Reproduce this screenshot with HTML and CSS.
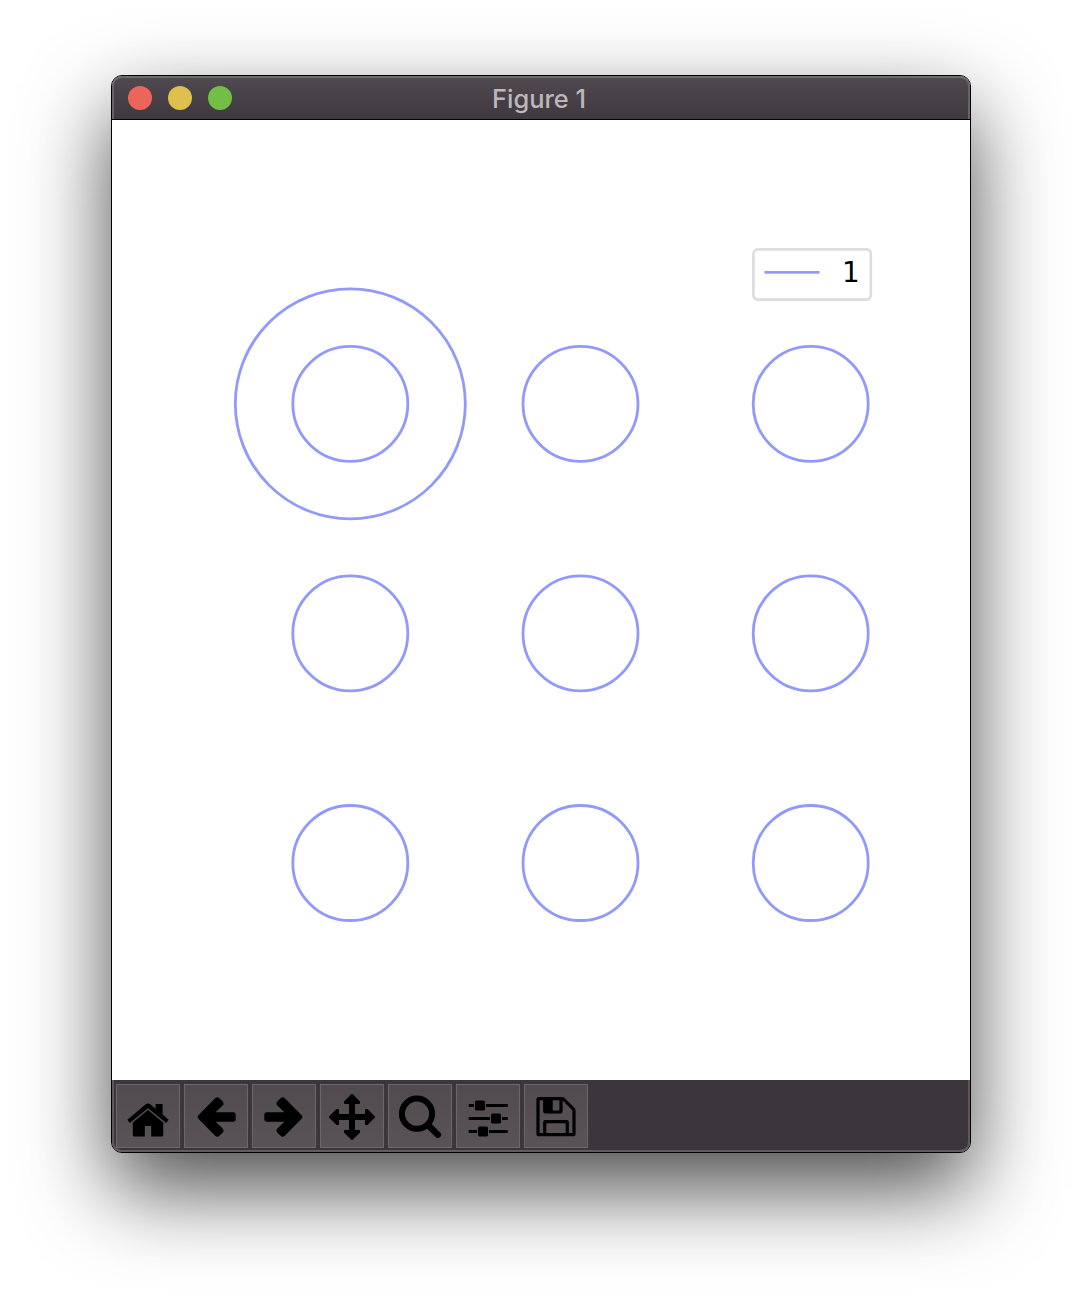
FILE: index.html
```html
<!DOCTYPE html>
<html lang="en">
<head>
<meta charset="utf-8">
<title>Figure 1</title>
<link rel="stylesheet" href="styles.css">
</head>
<body>
<main class="window">
  <header class="titlebar">
    <div class="lights"><span class="light close"></span><span class="light minimize"></span><span class="light expand"></span></div>
    <h1 class="title">Figure 1</h1>
  </header>
  <svg class="plot" viewBox="112 120 858 960" width="858" height="960">
    <g class="curves">
      <circle cx="350.3" cy="403.8" r="115"/>
      <circle cx="350.3" cy="403.8" r="57.5"/>
      <circle cx="580.5" cy="403.8" r="57.5"/>
      <circle cx="810.7" cy="403.8" r="57.5"/>
      <circle cx="350.3" cy="633.4" r="57.5"/>
      <circle cx="580.5" cy="633.4" r="57.5"/>
      <circle cx="810.7" cy="633.4" r="57.5"/>
      <circle cx="350.3" cy="863" r="57.5"/>
      <circle cx="580.5" cy="863" r="57.5"/>
      <circle cx="810.7" cy="863" r="57.5"/>
      <path d="M764.5 272.4H819.5"/>
    </g>
    <rect class="legend-box" x="753.4" y="249.4" width="117.4" height="50.2" rx="4.5"/>
    <text class="legend-text" x="842" y="282">1</text>
  </svg>
  <nav class="toolbar">
    <button class="tool" aria-label="Home"><svg viewBox="0 0 64 64">
      <path d="M32 26 47.2 38.6V51Q47.2 52.6 45.6 52.6H35.2V42H28.8V52.6H18.4Q16.8 52.6 16.8 51V38.6Z"/>
      <path d="M32 19.6Q33.4 19.6 34.6 20.6L39.6 24.8V20H46.6V30.6L52.6 35.8 50.2 39 32 24.2 13.8 39 11.4 35.8 29.4 20.6Q30.6 19.6 32 19.6Z"/>
    </svg></button>
    <button class="tool" aria-label="Back"><svg viewBox="0 0 64 64">
      <path class="arrow" d="M14.8 32.2 31.8 14.9Q33.3 13.5 34.8 14.9L38 18Q39.3 19.4 38 20.8L29.4 29.2H49Q50.8 29.2 50.8 31V35Q50.8 36.8 49 36.8H29.4L38 45.2Q39.3 46.6 38 48L34.8 51.1Q33.3 52.5 31.8 51.1L14.8 33.8Q14.2 33 14.8 32.2Z"/>
    </svg></button>
    <button class="tool" aria-label="Forward"><svg viewBox="0 0 64 64">
      <path class="arrow" transform="matrix(-1 0 0 1 64 0)" d="M14.8 32.2 31.8 14.9Q33.3 13.5 34.8 14.9L38 18Q39.3 19.4 38 20.8L29.4 29.2H49Q50.8 29.2 50.8 31V35Q50.8 36.8 49 36.8H29.4L38 45.2Q39.3 46.6 38 48L34.8 51.1Q33.3 52.5 31.8 51.1L14.8 33.8Q14.2 33 14.8 32.2Z"/>
    </svg></button>
    <button class="tool" aria-label="Pan"><svg viewBox="0 0 64 64">
      <path class="round" d="M32 11 39 18V19H34V31H46V26H47L54 33 47 40H46V35H34V47H39V48L32 55 25 48V47H30V35H18V40H17L10 33 17 26H18V31H30V19H25V18Z"/>
    </svg></button>
    <button class="tool" aria-label="Zoom"><svg viewBox="0 0 64 64">
      <circle class="line lens" cx="29" cy="29.7" r="15.1"/><path class="line handle" d="M40.5 41.5 49.8 50.8"/>
    </svg></button>
    <button class="tool" aria-label="Configure subplots"><svg viewBox="0 0 64 64">
      <path d="M12.7 19.9H18V23.1H12.7ZM30 19.9H51.7V23.1H30ZM12.7 32.9H34V36.1H12.7ZM46 32.9H51.7V36.1H46ZM12.7 45.9H21V49.1H12.7ZM33 45.9H51.7V49.1H33Z"/>
      <rect x="19" y="16.5" width="10" height="10" rx="1.5"/><rect x="35" y="29.5" width="10" height="10" rx="1.5"/><rect x="22" y="42.5" width="10" height="10" rx="1.5"/>
    </svg></button>
    <button class="tool" aria-label="Save"><svg viewBox="0 0 64 64">
      <path class="line disk" d="M15 14.7H38Q39 14.7 40 15.7L49 24.7Q50 25.7 50 27V49.7Q50 50.7 49 50.7H15Q14 50.7 14 49.7V15.7Q14 14.7 15 14.7Z"/>
      <path class="line disk" d="M20.7 15V27.2Q20.7 28 21.5 28H36.2Q37 28 37 27.2V15M20.7 50.7V38.5Q20.7 37.7 21.5 37.7H42.5Q43.3 37.7 43.3 38.5V50.7"/>
      <path d="M20 14H28.7V28H20Z"/>
    </svg></button>
  </nav>
</main>
</body>
</html>
```
FILE: styles.css
```css
* { box-sizing: border-box; }
body { margin: 0; padding: 75px 0 0 111px; height: 1300px; background: #fff; overflow: hidden; }
.window {
  width: 860px; height: 1078px; border: 1px solid #000; border-radius: 11px; background: #fff;
  background-clip: padding-box;
  box-shadow: 0 36px 86px rgba(0, 0, 0, .7);
}
.titlebar {
  height: 44px; display: grid; grid-template-columns: 1fr auto 1fr; align-items: center;
  padding: 0 16px; border-bottom: 1px solid #000; border-radius: 10px 10px 0 0;
  background: linear-gradient(#504a50, #3f393f);
  box-shadow: inset 0 2px #6f6c70, inset 2px 0 #676368, inset -2px 0 #676368;
}
.lights { display: flex; gap: 16px; }
.light { width: 24px; height: 24px; border-radius: 50%; }
.close { background: #ed655a; }
.minimize { background: #e0c04c; }
.expand { background: #72be47; }
.title { margin: 3px 4px 0 0; font: 450 25.4px/32px Inter, sans-serif; color: #bbb7bb; white-space: nowrap; }
.plot { display: block; background: #fff; }
.curves { fill: none; stroke: #9299fb; stroke-width: 2.8; }
.legend-box { fill: none; stroke: #ddd; stroke-width: 2.7; }
.legend-text { font: 27.8px "DejaVu Sans", sans-serif; fill: #000; }
.toolbar {
  height: 72px; display: flex; gap: 4px; padding: 4px; border-radius: 0 0 10px 10px;
  background: #3c363c; box-shadow: inset 0 -2px #625c62, inset 2px 0 #5d575d, inset -2px 0 #5d575d;
}
.tool {
  width: 64px; height: 64px; padding: 0; border: 0; display: block;
  background: linear-gradient(#514b50, #595358); box-shadow: inset 0 0 0 1px #6c676c;
}
.tool svg { display: block; width: 64px; height: 64px; fill: #000; }
.round, .arrow { stroke: #000; stroke-width: 2; stroke-linejoin: round; }
.arrow { stroke-width: 1.8; }
.tool .line { fill: none; stroke: #000; }
.lens { stroke-width: 6; }
.handle { stroke-width: 6.5; stroke-linecap: round; }
.disk { stroke-width: 3.2; }
```
